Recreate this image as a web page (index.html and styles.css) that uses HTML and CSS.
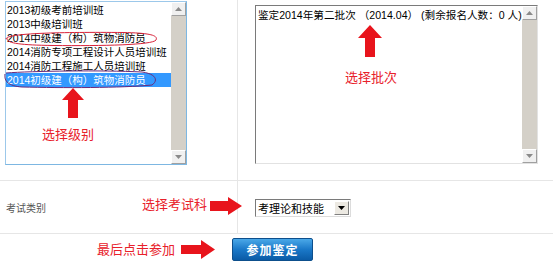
FILE: index.html
```html
<!DOCTYPE html>
<html lang="zh-CN">
<head>
<meta charset="utf-8">
<title>报名</title>
<link rel="stylesheet" href="styles.css">
</head>
<body>
<div class="form">
  <div class="row r1">
    <div class="cell c-left">
      <div class="listbox lb1">
        <div class="items">
          <div class="item">2013初级考前培训班</div>
          <div class="item">2013中级培训班</div>
          <div class="item">2014中级建（构）筑物消防员</div>
          <div class="item">2014消防专项工程设计人员培训班</div>
          <div class="item">2014消防工程施工人员培训班</div>
          <div class="item sel">2014初级建（构）筑物消防员</div>
        </div>
        <div class="sbar">
          <div class="sbtn"><svg width="7" height="4" viewBox="0 0 7 4"><path d="M0 4 L3.5 0 L7 4 Z" fill="#8a8a8a"/></svg></div>
          <div class="track"></div>
          <div class="sbtn"><svg width="7" height="4" viewBox="0 0 7 4"><path d="M0 0 L3.5 4 L7 0 Z" fill="#8a8a8a"/></svg></div>
        </div>
      </div>
    </div>
    <div class="cell c-right">
      <div class="listbox lb2">
        <div class="items">
          <div class="item">鉴定2014年第二批次 （2014.04） (剩余报名人数：0 人)</div>
        </div>
        <div class="sbar">
          <div class="sbtn"><svg width="7" height="4" viewBox="0 0 7 4"><path d="M0 4 L3.5 0 L7 4 Z" fill="#8a8a8a"/></svg></div>
          <div class="track"></div>
          <div class="sbtn"><svg width="7" height="4" viewBox="0 0 7 4"><path d="M0 0 L3.5 4 L7 0 Z" fill="#8a8a8a"/></svg></div>
        </div>
      </div>
    </div>
  </div>
  <div class="row r2">
    <div class="cell c-left lbl">考试类别</div>
    <div class="cell c-right mid">
      <div class="select">
        <span class="sel-text">考理论和技能</span>
        <span class="sel-btn"><svg width="7" height="4" viewBox="0 0 7 4"><path d="M0 0 L3.5 4 L7 0 Z" fill="#000"/></svg></span>
      </div>
    </div>
  </div>
  <div class="row r3">
    <button class="btn">参加鉴定</button>
  </div>

  <svg class="ring ring1" width="156" height="18" viewBox="0 0 156 18"><path d="M3 9 C3 3 60 2 120 2.5 C150 3 155 6 153 10 C150 15 100 16 50 15.5 C15 15 3 13 4 8" fill="none" stroke="#d8233a" stroke-width="1"/></svg>
  <svg class="ring ring2" width="156" height="20" viewBox="0 0 156 20"><path d="M4 4 C30 2 100 1 140 3 C155 5 156 12 150 16 C120 19 60 19 20 18 C6 17 2 12 3 5" fill="none" stroke="#6a2a7a" stroke-width="1"/></svg>

  <svg class="arrow a-up1" width="22" height="30" viewBox="0 0 22 30"><path d="M11 0 L22 12 L16 12 L16 30 L6 30 L6 12 L0 12 Z" fill="#e8141c"/></svg>
  <div class="note n1">选择级别</div>

  <svg class="arrow a-up2" width="24" height="32" viewBox="0 0 24 32"><path d="M12 0 L24 13 L17 13 L17 32 L7 32 L7 13 L0 13 Z" fill="#e8141c"/></svg>
  <div class="note n2">选择批次</div>

  <div class="note n3">选择考试科</div>
  <svg class="arrow a-r1" width="32" height="18" viewBox="0 0 32 18"><path d="M0 4 L18 4 L18 0 L32 9 L18 18 L18 14 L0 14 Z" fill="#e8141c"/></svg>

  <div class="note n4">最后点击参加</div>
  <svg class="arrow a-r2" width="34" height="19" viewBox="0 0 34 19"><path d="M0 5 L20 5 L20 0 L34 9.5 L20 19 L20 14 L0 14 Z" fill="#e8141c"/></svg>
</div>
</body>
</html>
```
FILE: styles.css
```css
html, body {
  margin: 0;
  padding: 0;
  background: #fff;
}
body {
  width: 553px;
  height: 266px;
  overflow: hidden;
  font-family: "Liberation Sans", "Noto Sans CJK SC", sans-serif;
}
.form {
  position: relative;
  width: 553px;
}
.row {
  display: grid;
  grid-template-columns: 237px 1fr;
  box-sizing: border-box;
  border-bottom: 1px solid #e6e6e6;
}
.r1 { height: 181px; }
.r2 { height: 53px; }
.r3 {
  display: block;
  border-bottom: none;
  padding: 4px 0 0 232px;
}
.c-left { padding: 1px 0 0 5px; }
.c-right {
  border-left: 1px solid #e6e6e6;
  padding: 5px 0 0 17px;
}
.listbox {
  box-sizing: border-box;
  display: flex;
  background: #fff;
}
.lb1 {
  width: 182px;
  height: 164px;
  border: 1px solid #7db7e2;
  border-top-color: #9cc8ea;
  border-left-color: #9cc8ea;
}
.lb2 {
  width: 283px;
  height: 159px;
  border: 1px solid #e2e2e2;
  border-top-color: #7a7a7a;
  border-left-color: #7a7a7a;
}
.items {
  flex: 1;
  min-width: 0;
  overflow: hidden;
  padding-top: 1px;
}
.lb2 .items { padding: 2px 0 0 1px; }
.item {
  height: 14px;
  line-height: 14px;
  font-size: 10.5px;
  color: #000;
  white-space: nowrap;
  padding-left: 1px;
}
.lb2 .item { font-size: 10.6px; }
.item.sel {
  background: #3399ff;
  color: #fff;
}
.sbar {
  width: 15px;
  display: flex;
  flex-direction: column;
  background: #d4d0c8;
}
.sbtn {
  height: 14px;
  box-sizing: border-box;
  background: #f0f0f0;
  border: 1px solid #fff;
  border-right-color: #a0a0a0;
  border-bottom-color: #a0a0a0;
  display: flex;
  align-items: center;
  justify-content: center;
}
.track {
  flex: 1;
  background: #d4d0c8;
}
.lbl {
  display: flex;
  align-items: center;
  padding: 0 0 0 6px;
  font-size: 10px;
  color: #555;
}
.mid {
  display: flex;
  align-items: center;
  padding-top: 0;
}
.select {
  box-sizing: border-box;
  width: 96px;
  height: 18px;
  display: flex;
  align-items: center;
  border: 1px solid #7a7a7a;
  border-right-color: #dcdcdc;
  border-bottom-color: #dcdcdc;
  background: #fff;
  margin-top: 1px;
}
.sel-text {
  flex: 1;
  font-size: 11px;
  padding-left: 2px;
  color: #000;
}
.sel-btn {
  width: 15px;
  height: 14px;
  box-sizing: border-box;
  margin-right: 1px;
  background: #ece9e2;
  border: 1px solid #fff;
  border-right-color: #808080;
  border-bottom-color: #808080;
  display: flex;
  align-items: center;
  justify-content: center;
}
.btn {
  width: 81px;
  height: 23px;
  box-sizing: border-box;
  border: 1px solid #0d4f8c;
  border-radius: 2px;
  background: linear-gradient(#4aa8e8, #1a78c8 50%, #0a5ba6);
  color: #fff;
  font-family: "Noto Sans CJK SC", sans-serif;
  font-weight: bold;
  font-size: 12px;
  padding: 0;
  letter-spacing: 1px;
  display: block;
}
.ring, .arrow, .note {
  position: absolute;
}
.ring1 { left: 3px; top: 30px; }
.ring2 { left: 2px; top: 69px; }
.a-up1 { left: 62px; top: 88px; }
.a-up2 { left: 358px; top: 25px; }
.a-r1 { left: 210px; top: 197px; }
.a-r2 { left: 181px; top: 240px; }
.note {
  color: #e8202a;
  font-family: "Noto Sans CJK SC", sans-serif;
  font-size: 13px;
  line-height: 16px;
  white-space: nowrap;
}
.n1 { left: 42px; top: 126px; }
.n2 { left: 345px; top: 69px; }
.n3 { left: 142px; top: 196px; }
.n4 { left: 97px; top: 241px; }
```
